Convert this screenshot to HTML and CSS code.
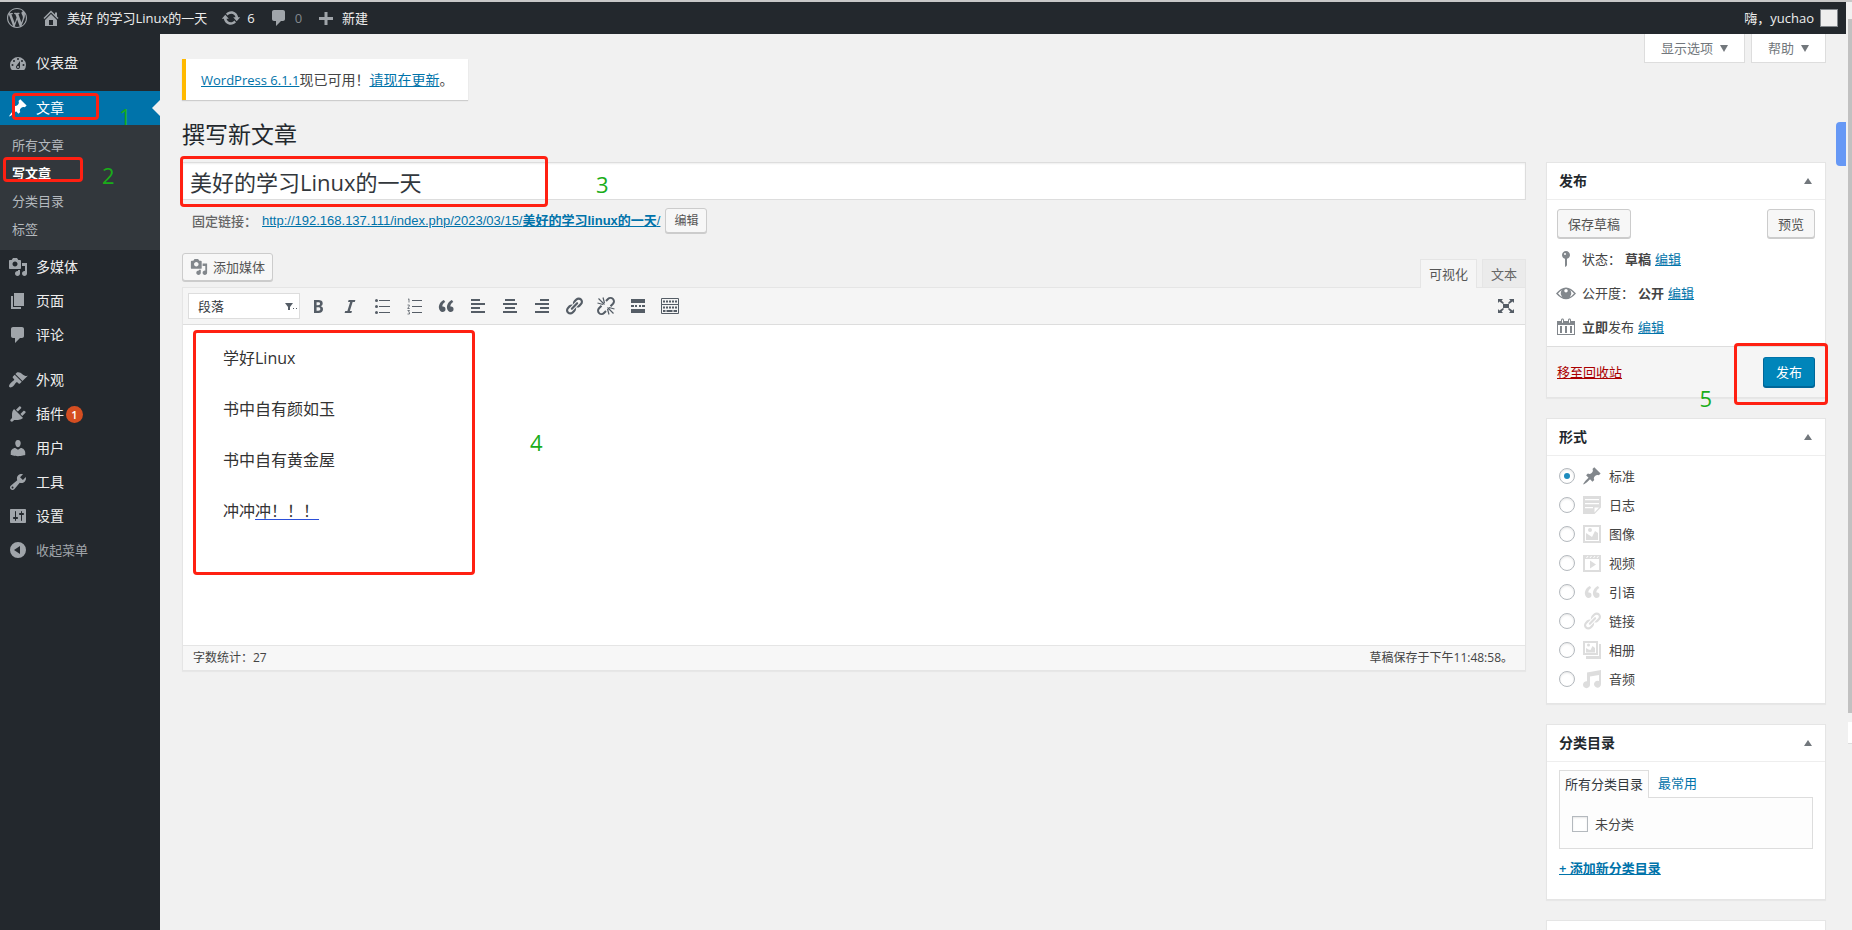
FILE: index.html
```html
<!DOCTYPE html>
<html lang="zh-CN">
<head>
  <meta charset="UTF-8">
  <meta name="viewport" content="width=device-width, initial-scale=1.0">
  <title>撰写新文章</title>
  <link rel="stylesheet" href="styles.css">
</head>
<body>
  <!-- icon set -->
  <svg class="sprite" aria-hidden="true">
    <symbol id="i-wp" viewBox="0 0 20 20"><path d="M20 10c0-5.51-4.49-10-10-10C4.48 0 0 4.49 0 10c0 5.52 4.48 10 10 10 5.51 0 10-4.48 10-10zM7.78 15.37L4.37 6.22c.55-.02 1.17-.08 1.17-.08.5-.06.44-1.13-.06-1.11 0 0-1.45.11-2.37.11-.18 0-.37 0-.58-.01C4.12 2.69 6.87 1.11 10 1.11c2.33 0 4.45.87 6.05 2.34-.68-.11-1.65.39-1.65 1.58 0 .74.45 1.36.9 2.1.35.61.55 1.36.55 2.46 0 1.49-1.4 5-1.4 5l-3.03-8.37c.54-.02.82-.17.82-.17.5-.05.44-1.25-.06-1.22 0 0-1.44.12-2.38.12-.87 0-2.33-.12-2.33-.12-.5-.03-.56 1.2-.06 1.22l.92.08 1.26 3.41zM17.41 10c.24-.64.74-1.87.43-4.25.7 1.29 1.05 2.71 1.05 4.25 0 3.29-1.73 6.24-4.4 7.78.97-2.59 1.94-5.2 2.92-7.78zM6.1 18.09C3.12 16.65 1.11 13.53 1.11 10c0-1.3.23-2.48.72-3.59C3.25 10.3 4.67 14.2 6.1 18.09zm4.03-6.63l2.58 6.98c-.86.29-1.76.45-2.71.45-.79 0-1.57-.11-2.29-.33.81-2.38 1.62-4.74 2.42-7.1z"/></symbol>
    <symbol id="i-home" viewBox="0 0 20 20"><path d="M16 8.5l1.53 1.53-1.06 1.06L10 4.6l-6.47 6.49-1.06-1.06L10 2.5l4 4v-2h2v4zm-6-2.46l6 5.99V18H4v-5.97zM12 17v-5H8v5h4z"/></symbol>
    <symbol id="i-update" viewBox="0 0 20 20"><path d="M10.2 3.28c3.53 0 6.43 2.61 6.92 6h2.08l-3.5 4-3.5-4h2.32c-.45-1.97-2.21-3.45-4.32-3.45-1.45 0-2.73.71-3.54 1.78L4.95 5.66C6.23 4.2 8.11 3.28 10.2 3.28zm-.4 13.44c-3.52 0-6.43-2.61-6.92-6H.8l3.5-4 3.5 4H5.48c.45 1.97 2.21 3.45 4.32 3.45 1.45 0 2.73-.71 3.54-1.78l1.71 1.95c-1.28 1.46-3.15 2.38-5.25 2.38z"/></symbol>
    <symbol id="i-comment" viewBox="0 0 20 20"><path d="M5 2h9c1.1 0 2 .9 2 2v7c0 1.1-.9 2-2 2h-2l-5 5v-5H5c-1.1 0-2-.9-2-2V4c0-1.1.9-2 2-2z"/></symbol>
    <symbol id="i-plus" viewBox="0 0 20 20"><path d="M17 9v3h-5.500v5h-3v-5H3V9h5.500V4h3v5z"/></symbol>
    <symbol id="i-dashboard" viewBox="0 0 20 20"><path fill-rule="evenodd" d="M3.76 17h12.48A8 8 0 1 0 3.760 17zM10 5a1 1 0 1 1 0 2 1 1 0 0 1 0-2zM6 7a1 1 0 1 1 0 2 1 1 0 0 1 0-2zm8 0a1 1 0 1 1 0 2 1 1 0 0 1 0-2zm-5.370 5.550L12 8v6a2 2 0 1 1-3.370-1.450zM4.500 11a1 1 0 1 1 0 2 1 1 0 0 1 0-2zm11 0a1 1 0 1 1 0 2 1 1 0 0 1 0-2zM10 13a1 1 0 1 0 0 2 1 1 0 0 0 0-2z"/></symbol>
    <symbol id="i-pin" viewBox="0 0 20 20"><path d="M10.44 3.02l1.82-1.82 6.36 6.35-1.83 1.82c-1.05-.68-2.48-.57-3.41.36l-.75.75c-.92.93-1.04 2.35-.35 3.41l-1.83 1.82-2.41-2.41-2.8 2.79c-.42.42-3.38 2.71-3.8 2.29s1.86-3.39 2.28-3.81l2.79-2.79L4.1 9.36l1.83-1.82c1.05.69 2.48.57 3.4-.36l.75-.75c.93-.92 1.05-2.35.36-3.41z"/></symbol>
    <symbol id="i-media" viewBox="0 0 20 20"><path d="M13 11V4c0-.55-.45-1-1-1h-1.670L9 1H5L3.670 3H2c-.55 0-1 .45-1 1v7c0 .55.45 1 1 1h10c.55 0 1-.45 1-1zM7 4.500c1.380 0 2.500 1.120 2.500 2.500S8.380 9.500 7 9.500 4.500 8.380 4.500 7 5.620 4.500 7 4.500zM14 6h5v10.500c0 1.380-1.120 2.500-2.500 2.500S14 17.880 14 16.500s1.120-2.500 2.500-2.500c.17 0 .34.02.5.05V9h-3V6zm-4 8.050V13h2v3.500c0 1.380-1.120 2.500-2.500 2.500S7 17.880 7 16.500 8.120 14 9.500 14c.17 0 .34.02.5.05z"/></symbol>
    <symbol id="i-page" viewBox="0 0 20 20"><path d="M6 15V2h10v13H6zm-1 1h8v2H3V5h2v11z"/></symbol>
    <symbol id="i-brush" viewBox="0 0 20 20"><path d="M14.48 11.06L7.41 3.99l1.5-1.5c.5-.56 2.3-.47 3.51.32 1.21.8 1.43 1.28 2.91 2.1 1.18.64 2.45 1.26 4.45.85zm-.71.71L6.7 4.7 4.93 6.47c-.39.39-.39 1.02 0 1.41l1.06 1.06c.39.39.39 1.03 0 1.42-.6.6-1.43 1.11-2.21 1.69-.35.26-.7.53-1.01.84C1.43 14.23.4 16.08 1.4 17.07c.99 1 2.84-.03 4.18-1.36.31-.31.58-.66.85-1.02.57-.78 1.08-1.61 1.69-2.21.39-.39 1.02-.39 1.41 0l1.06 1.06c.39.39 1.02.39 1.41 0z"/></symbol>
    <symbol id="i-plug" viewBox="0 0 20 20"><path d="M13.11 4.36L9.87 7.6 8 5.73l3.24-3.24c.35-.34 1.05-.2 1.56.32.52.51.66 1.21.31 1.55zm-8 1.77l.91-1.12 9.01 9.01-1.19.84c-.71.71-2.63 1.16-3.82 1.16H6.14L4.9 17.26c-.59.59-1.54.59-2.12 0-.59-.58-.59-1.53 0-2.12l1.24-1.24v-3.88c0-1.13.4-3.19 1.09-3.89zm7.26 3.97l3.24-3.24c.34-.35 1.04-.21 1.55.31.52.51.66 1.21.31 1.55l-3.24 3.25z"/></symbol>
    <symbol id="i-user" viewBox="0 0 20 20"><path d="M10 9.25c-2.27 0-2.73-3.44-2.73-3.44C7 4.02 7.82 2 9.97 2c2.16 0 2.98 2.02 2.71 3.81 0 0-.41 3.44-2.68 3.44zm0 2.57L12.72 10c2.39 0 4.520 2.330 4.520 4.530v2.490s-3.650 1.130-7.240 1.130c-3.650 0-7.240-1.130-7.240-1.130v-2.490c0-2.250 1.940-4.480 4.470-4.480z"/></symbol>
    <symbol id="i-wrench" viewBox="0 0 20 20"><path d="M16.68 9.77c-1.34 1.34-3.3 1.67-4.95.99l-5.41 6.52c-.99.99-2.59.99-3.58 0s-.99-2.59 0-3.57l6.52-5.42c-.68-1.65-.35-3.61.99-4.95 1.28-1.28 3.12-1.62 4.72-1.06l-2.89 2.89 2.82 2.82 2.86-2.87c.53 1.58.18 3.39-1.08 4.65zM3.81 16.21c.4.39 1.04.39 1.43 0 .4-.4.4-1.04 0-1.43-.39-.4-1.03-.4-1.43 0-.39.39-.39 1.03 0 1.43z"/></symbol>
    <symbol id="i-settings" viewBox="0 0 20 20"><path d="M18 16V4c0-.55-.45-1-1-1H3c-.55 0-1 .45-1 1v12c0 .55.45 1 1 1h14c.55 0 1-.45 1-1zM8 11h1c.55 0 1 .45 1 1s-.45 1-1 1H8v1.500c0 .28-.22.5-.5.5s-.5-.22-.5-.5V13H6c-.55 0-1-.45-1-1s.45-1 1-1h1V5.500c0-.28.22-.5.5-.5s.5.22.5.5V11zm5-2h-1c-.55 0-1-.45-1-1s.45-1 1-1h1V5.500c0-.28.22-.5.5-.5s.5.22.5.5V7h1c.55 0 1 .45 1 1s-.45 1-1 1h-1v5.500c0 .28-.22.5-.5.5s-.5-.22-.5-.5V9z"/></symbol>
    <symbol id="i-collapse" viewBox="0 0 20 20"><path fill-rule="evenodd" d="M10 2a8 8 0 1 0 0 16 8 8 0 0 0 0-16zm2 4v8l-6-4z"/></symbol>
    <symbol id="i-bold" viewBox="0 0 20 20"><path d="M6 4v13h4.540c1.370 0 2.460-.33 3.260-1 .8-.66 1.200-1.580 1.200-2.770 0-.84-.17-1.510-.51-2.010s-.9-.85-1.670-1.030v-.09c.57-.1 1.020-.4 1.360-.9s.51-1.130.51-1.910c0-1.140-.39-1.980-1.170-2.500C12.750 4.260 11.500 4 9.780 4H6zm2.570 5.150V6.260h1.360c.73 0 1.270.11 1.610.32.34.22.51.58.51 1.070 0 .54-.16.92-.47 1.150s-.82.35-1.510.35h-1.500zm0 2.190h1.600c1.440 0 2.160.53 2.160 1.610 0 .6-.17 1.050-.51 1.340s-.86.43-1.570.43H8.570v-3.380z"/></symbol>
    <symbol id="i-italic" viewBox="0 0 20 20"><path d="M14.78 6h-2.130l-2.800 9h2.120l-.62 2H4.600l.62-2h2.140l2.800-9H8.030l.62-2h6.750z"/></symbol>
    <symbol id="i-ul" viewBox="0 0 20 20"><path d="M7 4h11v1H7zM7 10h11v1H7zM7 16h11v1H7z"/><circle cx="4.500" cy="4.500" r="1.500"/><circle cx="4.500" cy="10.500" r="1.500"/><circle cx="4.500" cy="16.500" r="1.500"/></symbol>
    <symbol id="i-ol" viewBox="0 0 20 20"><path d="M8 4h10v1H8zM8 10h10v1H8zM8 16h10v1H8z"/><path d="M4 3.500l1-.7V6.500M3.500 9h1.800v1L3.700 12.500h2M3.500 14.500h2l-1 1.500 1 .5v1.500h-2" fill="none" stroke="currentColor" stroke-width=".8"/></symbol>
    <symbol id="i-quote" viewBox="0 0 20 20"><path d="M9.49 13.22c0-.74-.2-1.380-.61-1.900-.62-.78-1.830-.88-2.530-.72-.29-1.650 1.110-3.750 2.920-4.650L7.880 4c-2.730 1.300-5.420 4.280-4.960 8.050C3.210 14.430 4.590 16 6.540 16c.85 0 1.560-.25 2.120-.75s.83-1.180.83-2.030zm8.050 0c0-.74-.2-1.380-.61-1.900-.63-.78-1.830-.88-2.530-.72-.29-1.650 1.110-3.750 2.920-4.650L15.930 4c-2.730 1.300-5.410 4.280-4.950 8.050.29 2.380 1.660 3.950 3.610 3.950.85 0 1.560-.25 2.120-.75s.83-1.180.83-2.030z"/></symbol>
    <symbol id="i-left" viewBox="0 0 20 20"><path d="M3 3h9v2H3zM3 7h14v2H3zM3 11h9v2H3zM3 15h14v2H3z"/></symbol>
    <symbol id="i-center" viewBox="0 0 20 20"><path d="M5 3h10v2H5zM3 7h14v2H3zM5 11h10v2H5zM3 15h14v2H3z"/></symbol>
    <symbol id="i-right" viewBox="0 0 20 20"><path d="M8 3h9v2H8zM3 7h14v2H3zM8 11h9v2H8zM3 15h14v2H3z"/></symbol>
    <symbol id="i-link" viewBox="0 0 20 20"><path d="M17.74 2.76c1.68 1.69 1.68 4.41 0 6.1l-1.53 1.52c-1.12 1.12-2.7 1.47-4.14 1.09l2.62-2.61.76-.77.76-.76c.84-.84.84-2.2 0-3.04-.84-.85-2.2-.85-3.04 0l-.77.76-3.38 3.38c-.37-1.44-.02-3.02 1.1-4.14l1.52-1.53c1.69-1.68 4.42-1.68 6.1 0zM8.59 13.43l5.34-5.34c.42-.42.42-1.1 0-1.52-.44-.43-1.13-.39-1.53 0l-5.33 5.34c-.42.42-.42 1.1 0 1.52.44.43 1.13.39 1.52 0zm-.76 2.29l4.14-4.15c.38 1.44.03 3.02-1.09 4.14l-1.52 1.53c-1.69 1.68-4.41 1.68-6.1 0-1.68-1.68-1.68-4.42 0-6.1l1.53-1.52c1.12-1.12 2.7-1.47 4.14-1.1l-4.14 4.15c-.85.84-.85 2.2 0 3.05.84.84 2.2.84 3.04 0z"/></symbol>
    <symbol id="i-unlink" viewBox="0 0 20 20"><g fill="none" stroke="currentColor"><path stroke-width="2" d="M10 5l2-2a3.200 3.200 0 0 1 5 4.800L14.500 10.200M5.500 9.700L3 12.200a3.200 3.200 0 0 0 5 4.800l2-2"/><path stroke-width="1.200" d="M8.500 8.500L2.500 2.500M8.500 7L7 1.500M7 8.500L1.500 7M11.500 11.500L17.500 17.500M11.500 13l1.500 5.500M13 11.500l5.500 1.500"/></g></symbol>
    <symbol id="i-more" viewBox="0 0 20 20"><path d="M3 3h14v4H3zM3 9h3v2H3zM7 9h2v2H7zM11 9h2v2h-2zM14 9h3v2h-3zM3 13h14v4H3z"/></symbol>
    <symbol id="i-keyboard" viewBox="0 0 20 20"><g fill="none" stroke="currentColor"><path d="M1.500 2.500h17v6h-17zM1.500 8.500h17v9h-17z"/><path stroke-dasharray="2 1" stroke-width="2" d="M3 5.500h14M3 11.500h14"/><path stroke-width="2" d="M3 15h2.500M6.500 15h6M13.500 15H17"/></g></symbol>
    <symbol id="i-full" viewBox="0 0 20 20"><path d="M7 8h6v4H7zM2 3h5L5.600 4.400 8 7 7 8 3.400 5.600 2 7zM18 3v4l-1.400-1.400L13 8l-1-1 2.400-2.600L13 3zM2 17v-4l1.400 1.400L7 12l1 1-2.400 2.600L7 17zM18 17h-5l1.400-1.400L12 13l1-1 3.600 2.400L18 13z"/></symbol>
    <symbol id="i-status" viewBox="0 0 20 20"><path fill-rule="evenodd" d="M14 6c0 1.860-1.280 3.410-3 3.860V16c0 1-2 2-2 2V9.860C7.280 9.410 6 7.860 6 6c0-2.210 1.790-4 4-4s4 1.790 4 4zM8 5a1 1 0 1 0 2 0 1 1 0 0 0-2 0z"/></symbol>
    <symbol id="i-eye" viewBox="0 0 20 20"><path fill-rule="evenodd" d="M0 10.500Q10-1.500 20 10.500 10 22 0 10.500zM2 10.500q3 3.700 6 4.500a5 5 0 0 1-2-8Q4 8 2 10.500zM18 10.500Q16 8 14 7a5 5 0 0 1-2 8q3-.8 6-4.500zM10 6a1.500 1.500 0 1 0 0 3.500A1.500 1.500 0 0 0 10 6z"/></symbol>
    <symbol id="i-calendar" viewBox="0 0 20 20"><path d="M15 4h4v14H1V4h4V3c0-.83.67-1.500 1.500-1.500S8 2.170 8 3v1h4V3c0-.83.67-1.500 1.500-1.500S15 2.170 15 3v1zM6 3v2.500c0 .28.22.5.5.5s.5-.22.5-.5V3c0-.28-.22-.5-.5-.5S6 2.720 6 3zm7 0v2.500c0 .28.22.5.5.5s.5-.22.5-.5V3c0-.28-.22-.5-.5-.5s-.5.22-.5.5zm5 14V8H2v9h16zM6 16V9H4v7h2zm5 0V9H9v7h2zm5 0V9h-2v7h2z"/></symbol>
    <symbol id="i-aside" viewBox="0 0 20 20"><path fill-rule="evenodd" d="M1 1h18v11.500L12.500 19H1zM3 4v1.200h14V4zM3 8v1.200h14V8zM3 12v1.200h8V12zM12.500 17.500l4.500-5h-4.500z"/></symbol>
    <symbol id="i-image" viewBox="0 0 20 20"><path fill-rule="evenodd" d="M1 1h18v18H1zM3 3v14h14V3z"/><path d="M4 16V9l3 2 3 2 3-6 3 2v7z"/><circle cx="8" cy="6" r="2"/></symbol>
    <symbol id="i-video" viewBox="0 0 20 20"><path fill-rule="evenodd" d="M1 2h18v17H1zM3 6v11h14V6zM4 5h1l1.500-2h-1zM7.500 5h1L10 3H9zM11 5h1l1.500-2h-1zM14.500 5h1L17 3h-1z"/><path d="M8 7.500l6 4-6 4z"/></symbol>
    <symbol id="i-gallery" viewBox="0 0 20 20"><path fill-rule="evenodd" d="M1 1h15v14H1zM3 3v10h11V3z"/><path d="M4 12.500V8l2.500 1.500L8.500 10l2-4L13 8v4.500zM17 4h2v15H4v-3h13z"/><circle cx="6.500" cy="5" r="1.500"/></symbol>
    <symbol id="i-audio" viewBox="0 0 20 20"><path d="M19 1v14a3.500 3.500 0 1 1-2-3V6L8 7.500v8a3.500 3.500 0 1 1-3-3.300V3.500z"/></symbol>
  </svg>

  <div class="page">
    <header class="adminbar">
      <a href="#" aria-label="WordPress"><svg class="icon"><use href="#i-wp"/></svg></a>
      <a href="#" class="bar-site"><svg class="icon"><use href="#i-home"/></svg>美好 的学习Linux的一天</a>
      <a href="#"><svg class="icon"><use href="#i-update"/></svg>6</a>
      <a href="#" class="bar-muted"><svg class="icon"><use href="#i-comment"/></svg>0</a>
      <a href="#"><svg class="icon"><use href="#i-plus"/></svg>新建</a>
      <a href="#" class="account">嗨，yuchao<span class="avatar"></span></a>
    </header>

    <div class="layout">
      <nav class="menu">
        <a href="#"><svg class="icon"><use href="#i-dashboard"/></svg>仪表盘</a>
        <a href="#" class="current group"><svg class="icon"><use href="#i-pin"/></svg>文章</a>
        <div class="submenu">
          <a href="#">所有文章</a>
          <a href="#" class="active">写文章</a>
          <a href="#">分类目录</a>
          <a href="#">标签</a>
        </div>
        <a href="#"><svg class="icon"><use href="#i-media"/></svg>多媒体</a>
        <a href="#"><svg class="icon"><use href="#i-page"/></svg>页面</a>
        <a href="#"><svg class="icon"><use href="#i-comment"/></svg>评论</a>
        <a href="#" class="group"><svg class="icon"><use href="#i-brush"/></svg>外观</a>
        <a href="#"><svg class="icon"><use href="#i-plug"/></svg>插件<span class="count">1</span></a>
        <a href="#"><svg class="icon"><use href="#i-user"/></svg>用户</a>
        <a href="#"><svg class="icon"><use href="#i-wrench"/></svg>工具</a>
        <a href="#"><svg class="icon"><use href="#i-settings"/></svg>设置</a>
        <button type="button" class="collapse"><svg class="icon"><use href="#i-collapse"/></svg>收起菜单</button>
      </nav>

      <main class="content">
        <div class="top">
          <p class="notice"><a href="#" class="version">WordPress 6.1.1</a>现已可用！<a href="#">请现在更新</a>。</p>
          <div class="screen-links">
            <button type="button">显示选项<span class="caret-down"></span></button>
            <button type="button">帮助<span class="caret-down"></span></button>
          </div>
        </div>
        <h1>撰写新文章</h1>

        <div class="columns">
          <section class="post">
            <input type="text" class="title" aria-label="标题" value="美好的学习Linux的一天">
            <div class="permalink">
              <strong>固定链接：</strong>
              <a href="#">http://192.168.137.111/index.php/2023/03/15/<b>美好的学习linux的一天</b>/</a>
              <button type="button" class="button small">编辑</button>
            </div>

            <div class="editor-tools">
              <button type="button" class="button media"><svg class="icon"><use href="#i-media"/></svg>添加媒体</button>
              <div class="editor-tabs">
                <button type="button" class="on">可视化</button>
                <button type="button">文本</button>
              </div>
            </div>

            <div class="editor">
              <div class="toolbar">
                <div class="format-select">
                  <select aria-label="段落格式"><option>段落</option></select>
                  <svg class="caret" viewBox="0 0 12 10"><path d="M0 2h8L5 6v3H3V6zM8 7h1v1H8zM11 7h1v1h-1z"/></svg>
                </div>
                <button type="button" aria-label="粗体"><svg class="icon"><use href="#i-bold"/></svg></button>
                <button type="button" aria-label="斜体"><svg class="icon"><use href="#i-italic"/></svg></button>
                <button type="button" aria-label="项目符号列表"><svg class="icon"><use href="#i-ul"/></svg></button>
                <button type="button" aria-label="编号列表"><svg class="icon"><use href="#i-ol"/></svg></button>
                <button type="button" aria-label="段落引用"><svg class="icon"><use href="#i-quote"/></svg></button>
                <button type="button" aria-label="左对齐"><svg class="icon"><use href="#i-left"/></svg></button>
                <button type="button" aria-label="居中对齐"><svg class="icon"><use href="#i-center"/></svg></button>
                <button type="button" aria-label="右对齐"><svg class="icon"><use href="#i-right"/></svg></button>
                <button type="button" aria-label="插入链接"><svg class="icon"><use href="#i-link"/></svg></button>
                <button type="button" aria-label="移除链接"><svg class="icon"><use href="#i-unlink"/></svg></button>
                <button type="button" aria-label="插入More标签"><svg class="icon"><use href="#i-more"/></svg></button>
                <button type="button" aria-label="显示工具栏"><svg class="icon"><use href="#i-keyboard"/></svg></button>
                <button type="button" class="fullscreen" aria-label="全屏"><svg class="icon"><use href="#i-full"/></svg></button>
              </div>
              <div class="body" contenteditable="true" spellcheck="false">
                <p>学好Linux</p>
                <p>书中自有颜如玉</p>
                <p>书中自有黄金屋</p>
                <p>冲冲<span class="composing">冲！！！</span></p>
              </div>
              <div class="status">
                <span>字数统计：27</span>
                <span>草稿保存于下午11:48:58。</span>
              </div>
            </div>
          </section>

          <aside class="boxes">
            <section class="box">
              <h2>发布<span class="caret-up"></span></h2>
              <div class="publish-actions">
                <button type="button" class="button">保存草稿</button>
                <button type="button" class="button">预览</button>
              </div>
              <div class="publish-info">
                <p><svg class="icon"><use href="#i-status"/></svg>状态： <b>草稿</b> <a href="#">编辑</a></p>
                <p><svg class="icon"><use href="#i-eye"/></svg>公开度： <b>公开</b> <a href="#">编辑</a></p>
                <p><svg class="icon"><use href="#i-calendar"/></svg><span><b>立即</b>发布</span> <a href="#">编辑</a></p>
              </div>
              <div class="publish-footer">
                <a href="#" class="trash">移至回收站</a>
                <button type="submit" class="button primary">发布</button>
              </div>
            </section>

            <section class="box">
              <h2>形式<span class="caret-up"></span></h2>
              <div class="formats">
                <label class="checked"><input type="radio" name="format" checked><svg class="icon"><use href="#i-pin"/></svg>标准</label>
                <label><input type="radio" name="format"><svg class="icon"><use href="#i-aside"/></svg>日志</label>
                <label><input type="radio" name="format"><svg class="icon"><use href="#i-image"/></svg>图像</label>
                <label><input type="radio" name="format"><svg class="icon"><use href="#i-video"/></svg>视频</label>
                <label><input type="radio" name="format"><svg class="icon"><use href="#i-quote"/></svg>引语</label>
                <label><input type="radio" name="format"><svg class="icon"><use href="#i-link"/></svg>链接</label>
                <label><input type="radio" name="format"><svg class="icon"><use href="#i-gallery"/></svg>相册</label>
                <label><input type="radio" name="format"><svg class="icon"><use href="#i-audio"/></svg>音频</label>
              </div>
            </section>

            <section class="box">
              <h2>分类目录<span class="caret-up"></span></h2>
              <div class="categories">
                <div class="cat-tabs">
                  <a href="#" class="on">所有分类目录</a>
                  <a href="#">最常用</a>
                </div>
                <div class="cat-panel">
                  <label><input type="checkbox">未分类</label>
                </div>
                <a href="#" class="cat-add">+ 添加新分类目录</a>
              </div>
            </section>

            <section class="box box-empty"></section>
          </aside>
        </div>
      </main>
    </div>
  </div>

  <div class="scrollbar">
    <div class="thumb"></div>
    <div class="scroll-mark"></div>
  </div>
  <div class="side-handle"></div>

  <!-- step marks -->
  <div class="mark mark-1"></div>
  <div class="mark mark-2"></div>
  <div class="mark mark-3"></div>
  <div class="mark mark-4"></div>
  <div class="mark mark-5"></div>
  <span class="step step-1">1</span>
  <span class="step step-2">2</span>
  <span class="step step-3">3</span>
  <span class="step step-4">4</span>
  <span class="step step-5">5</span>
</body>
</html>
```
FILE: styles.css
```css
* {
  box-sizing: border-box;
}
body {
  position: relative;
  display: flex;
  height: 100vh;
  margin: 0;
  overflow: hidden;
  border-top: 2px solid #c8c8c8;
  background: #f1f1f1;
  color: #444;
  font-family: "Open Sans", "Noto Sans CJK SC", sans-serif;
  font-size: 13px;
  line-height: 20px;
}
button, input, select {
  margin: 0;
  font-family: inherit;
  font-size: 13px;
  line-height: 20px;
  color: inherit;
}
h1, h2, p {
  margin: 0;
}
a {
  color: #0073aa;
}
.sprite {
  display: none;
}
.icon {
  flex: none;
  width: 20px;
  height: 20px;
  fill: currentColor;
}
.page {
  flex: 1;
  min-width: 0;
  display: flex;
  flex-direction: column;
}

/* admin bar */
.adminbar {
  flex: none;
  display: flex;
  align-items: center;
  gap: 14px;
  height: 32px;
  padding: 0 8px 0 7px;
  background: #23282d;
}
.adminbar a {
  display: flex;
  align-items: center;
  gap: 6px;
  color: #eee;
  text-decoration: none;
}
.adminbar .icon {
  color: #a0a5aa;
}
.adminbar .bar-muted {
  color: #82878c;
}
.adminbar .account {
  margin-left: auto;
}
.avatar {
  width: 18px;
  height: 18px;
  border: 1px solid #82878c;
  background: #eee;
}

/* side menu */
.layout {
  flex: 1;
  min-height: 0;
  display: flex;
}
.menu {
  flex: none;
  width: 160px;
  padding-top: 12px;
  background: #23282d;
}
.menu > a, .collapse {
  display: flex;
  align-items: center;
  gap: 8px;
  height: 34px;
  padding: 0 8px;
  color: #eee;
  font-size: 14px;
  text-decoration: none;
}
.menu .icon {
  color: #a0a5aa;
}
.menu .group {
  margin-top: 11px;
}
.menu .current {
  position: relative;
  background: #0073aa;
  color: #fff;
}
.menu .current .icon {
  color: #fff;
}
.menu .current::after {
  content: "";
  position: absolute;
  right: 0;
  top: 9px;
  border: 8px solid transparent;
  border-left-width: 0;
  border-right-color: #f1f1f1;
}
.submenu {
  padding: 6px 0 7px;
  background: #32373c;
}
.submenu a {
  display: block;
  padding: 4px 12px;
  color: #b4b9be;
  text-decoration: none;
}
.submenu .active {
  color: #fff;
  font-weight: 700;
}
.count {
  width: 17px;
  height: 17px;
  margin-left: -6px;
  border-radius: 50%;
  background: #d54e21;
  color: #fff;
  font-size: 11px;
  font-weight: 600;
  line-height: 17px;
  text-align: center;
}
.menu .collapse {
  width: 100%;
  border: 0;
  background: none;
  color: #a0a5aa;
  font-size: 13px;
}

/* content head */
.content {
  flex: 1;
  min-width: 0;
  padding: 0 20px 0 22px;
}
.top {
  display: flex;
  justify-content: space-between;
  align-items: flex-start;
}
.notice {
  margin-top: 25px;
  padding: 10px 15px;
  border-left: 4px solid #ffb900;
  background: #fff;
  box-shadow: 0 1px 1px rgba(0, 0, 0, .15);
  font-size: 14px;
  line-height: 21px;
}
.notice .version {
  font-size: 13px;
  line-height: 1;
}
.screen-links {
  display: flex;
  gap: 6px;
}
.screen-links button {
  display: flex;
  align-items: center;
  gap: 7px;
  height: 29px;
  padding: 0 16px;
  border: 1px solid #ddd;
  border-top: 0;
  background: #fff;
  color: #72777c;
}
.caret-down, .caret-up {
  border: 4px solid transparent;
}
.caret-down {
  border-top: 7px solid #72777c;
  border-bottom: 0;
}
.caret-up {
  border-bottom: 6px solid #72777c;
  border-top: 0;
}
h1 {
  padding: 19px 0 13px;
  color: #23282d;
  font-size: 23px;
  font-weight: 400;
  line-height: 30px;
}
.columns {
  display: flex;
  gap: 20px;
}

/* post column */
.post {
  flex: 1;
  min-width: 0;
}
.title {
  display: block;
  width: 100%;
  height: 38px;
  padding: 0 7px;
  border: 1px solid #ddd;
  background: #fff;
  box-shadow: inset 0 1px 2px rgba(0, 0, 0, .07);
  color: #32373c;
  font-size: 22px;
  line-height: 32px;
}
.permalink {
  display: flex;
  align-items: center;
  gap: 5px;
  padding: 8px 10px 20px;
  color: #666;
}
.permalink strong {
  font-weight: 500;
}
.permalink a {
  font-family: "Liberation Sans", "Noto Sans CJK SC", sans-serif;
}
.button {
  height: 29px;
  padding: 0 10px;
  border: 1px solid #ccc;
  border-radius: 3px;
  background: #f7f7f7;
  box-shadow: 0 1px 0 #ccc;
  color: #555;
}
.button.small {
  height: 25px;
  padding: 0 8px;
  font-size: 12px;
}
.button.media {
  display: flex;
  align-items: center;
  gap: 5px;
  height: 28px;
  padding: 0 7px;
}
.button.media .icon {
  width: 18px;
  height: 18px;
  color: #82878c;
}
.editor-tools {
  display: flex;
  justify-content: space-between;
  height: 34px;
}
.editor-tabs {
  display: flex;
  align-items: flex-end;
  gap: 5px;
}
.editor-tabs button {
  height: 28px;
  padding: 0 8px;
  border: 1px solid #e5e5e5;
  border-bottom: 0;
  background: #ebebeb;
  color: #666;
}
.editor-tabs .on {
  height: 29px;
  margin-bottom: -1px;
  background: #f5f5f5;
  color: #555;
}
.editor {
  border: 1px solid #e5e5e5;
  background: #fff;
  box-shadow: 0 1px 1px rgba(0, 0, 0, .04);
}
.toolbar {
  display: flex;
  align-items: center;
  gap: 4px;
  height: 37px;
  padding: 0 5px;
  border-bottom: 1px solid #ddd;
  background: #f5f5f5;
  color: #555d66;
}
.toolbar button {
  display: flex;
  width: 28px;
  padding: 0 4px;
  border: 0;
  background: none;
}
.toolbar .fullscreen {
  margin-left: auto;
}
.format-select {
  display: flex;
  align-items: center;
  width: 112px;
  height: 26px;
  padding: 0 2px 0 9px;
  border: 1px solid #ddd;
  background: #fff;
}
.format-select select {
  flex: 1;
  appearance: none;
  border: 0;
  background: none;
  color: #32373c;
}
.caret {
  width: 12px;
  height: 10px;
  fill: #555d66;
}
.body {
  height: 320px;
  padding: 20px 40px;
  outline: none;
  color: #333;
  font-size: 16px;
  line-height: 26px;
}
.body p {
  margin-bottom: 25px;
}
.composing {
  text-decoration: underline 1px #2b4fd8;
  text-underline-offset: 2px;
  text-decoration-skip-ink: none;
}
.status {
  display: flex;
  justify-content: space-between;
  padding: 2px 12px 2px 10px;
  border-top: 1px solid #e5e5e5;
  background: #f7f7f7;
  font-size: 12px;
}

/* meta boxes */
.boxes {
  flex: none;
  width: 280px;
  display: flex;
  flex-direction: column;
  gap: 20px;
}
.box {
  border: 1px solid #e5e5e5;
  background: #fff;
  box-shadow: 0 1px 1px rgba(0, 0, 0, .04);
}
.box-empty {
  height: 40px;
}
.box h2 {
  display: flex;
  justify-content: space-between;
  align-items: center;
  height: 37px;
  padding: 0 13px 0 12px;
  border-bottom: 1px solid #eee;
  color: #23282d;
  font-size: 14px;
  font-weight: 700;
}
.publish-actions {
  display: flex;
  justify-content: space-between;
  padding: 9px 10px 4px;
}
.publish-info p {
  display: flex;
  align-items: center;
  gap: 4px;
  height: 34px;
  padding: 0 9px;
}
.publish-info .icon {
  margin-right: 2px;
  color: #82878c;
}
.publish-footer {
  display: flex;
  justify-content: space-between;
  align-items: center;
  margin-top: 2px;
  padding: 10px;
  border-top: 1px solid #ddd;
  background: #f5f5f5;
}
.trash {
  color: #a00;
}
.button.primary {
  height: 30px;
  padding: 0 12px;
  border-color: #0073aa #006799 #006799;
  background: #0085ba;
  box-shadow: 0 1px 0 #006799;
  color: #fff;
}
.formats {
  padding: 5px 12px 10px;
}
.formats label {
  display: flex;
  align-items: center;
  height: 29px;
}
.formats .icon {
  margin: 0 7px;
  color: #ddd;
}
.formats .checked .icon {
  color: #82878c;
}
.boxes input {
  appearance: none;
  display: grid;
  place-items: center;
  width: 16px;
  height: 16px;
  border: 1px solid #b4b9be;
  background: #fff;
  box-shadow: inset 0 1px 2px rgba(0, 0, 0, .1);
}
.boxes input[type="radio"] {
  border-radius: 50%;
}
.boxes input[type="radio"]:checked::before {
  content: "";
  width: 6px;
  height: 6px;
  border-radius: 50%;
  background: #1e8cbe;
}
.categories {
  padding: 8px 12px 21px;
}
.cat-tabs {
  display: flex;
}
.cat-tabs a {
  padding: 3px 9px 4px;
  text-decoration: none;
}
.cat-tabs .on {
  margin-bottom: -1px;
  padding: 3px 5px 4px;
  border: 1px solid #ddd;
  border-bottom: 0;
  background: #fdfdfd;
  color: #32373c;
}
.cat-panel {
  height: 52px;
  padding: 16px 12px;
  border: 1px solid #ddd;
  background: #fdfdfd;
}
.cat-panel label {
  display: flex;
  align-items: center;
  gap: 7px;
}
.cat-add {
  display: block;
  width: max-content;
  margin-top: 9px;
  font-weight: 600;
}

/* window edge */
.scrollbar {
  flex: none;
  width: 6px;
  padding: 17px 0 0 2px;
}
.thumb {
  height: 694px;
  background: #c1c1c1;
}
.scroll-mark {
  height: 22px;
  margin-top: 9px;
  border-bottom: 1px solid #ddd;
  background: #fff;
}
.side-handle {
  position: absolute;
  top: 120px;
  right: 6px;
  width: 10px;
  height: 44px;
  border-radius: 4px 0 0 4px;
  background: #6698f5;
}

/* step marks */
.mark {
  position: absolute;
  border: 3px solid #ff2012;
  border-radius: 4px;
  pointer-events: none;
}
.mark-1 { left: 12px; top: 91px; width: 87px; height: 27px; }
.mark-2 { left: 3px; top: 155px; width: 80px; height: 25px; }
.mark-3 { left: 180px; top: 154px; width: 368px; height: 51px; }
.mark-4 { left: 193px; top: 328px; width: 282px; height: 245px; }
.mark-5 { right: 24px; top: 341px; width: 94px; height: 62px; }
.step {
  position: absolute;
  color: #1aad19;
  font-size: 22px;
  line-height: 30px;
}
.step-1 { left: 119px; top: 99px; }
.step-2 { left: 102px; top: 158px; }
.step-3 { left: 596px; top: 167px; }
.step-4 { left: 530px; top: 425px; }
.step-5 { right: 140px; top: 381px; }
```
